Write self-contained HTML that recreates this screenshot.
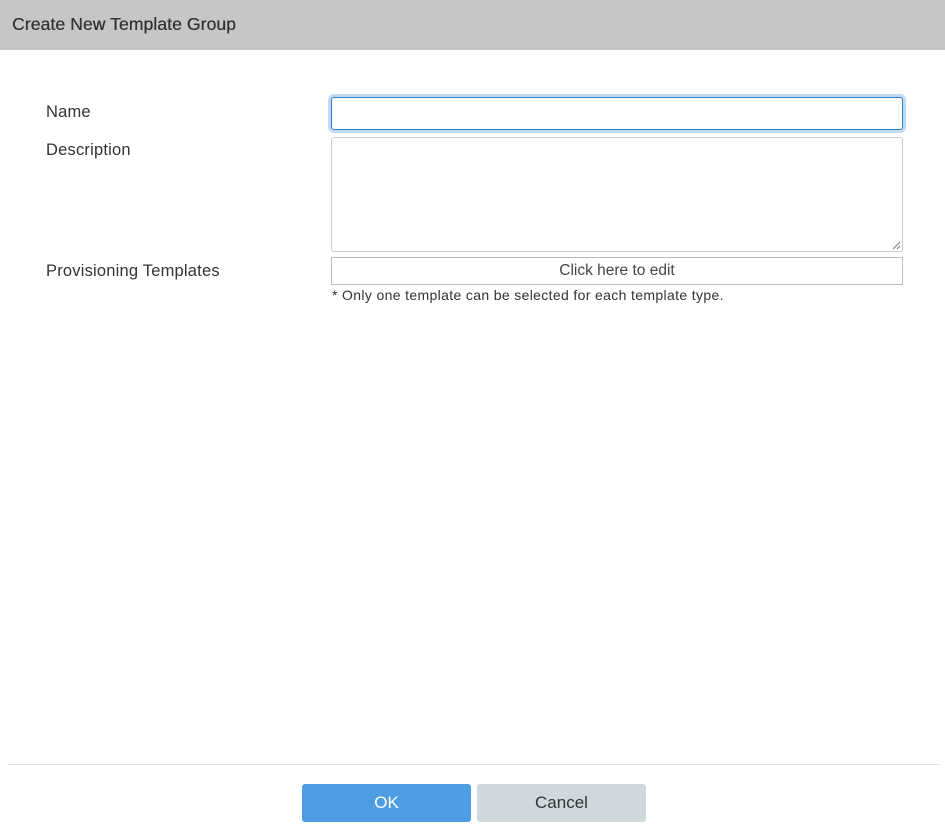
<!DOCTYPE html>
<html><head><style>
body{margin:0;width:945px;height:829px;background:#fff;font-family:"Liberation Sans",sans-serif;position:relative;overflow:hidden;color:#333}
.hdr{position:absolute;left:0;top:0;width:945px;height:50px;background:#c6c6c6}
.hdr span{position:absolute;left:12px;top:14px;font-size:17px;color:#333;letter-spacing:0.1px;font-weight:bold;-webkit-text-stroke:0;}
.lbl{position:absolute;left:46px;font-size:16.5px;color:#333;letter-spacing:0.2px}
.name{position:absolute;left:331px;top:97px;height:33px;border:1px solid #2b7cd3;border-radius:3px;box-shadow:0 0 0 3px #c2dbf3;box-sizing:border-box;width:572px}
.desc{position:absolute;left:331px;top:137px;width:572px;height:115px;border:1px solid #ccc;border-radius:3px;box-sizing:border-box}
.prov{position:absolute;left:331px;top:257px;width:572px;height:28px;border:1px solid #bbb;box-sizing:border-box;text-align:center;font-size:15.5px;line-height:25px;color:#444}
.note{position:absolute;left:332px;top:287px;font-size:14px;color:#333;letter-spacing:0.35px}
.line{position:absolute;left:8px;top:764px;width:932px;height:1px;background:#e3e3e3}
.btn{position:absolute;top:784px;height:38px;border-radius:3px;font-size:17px;text-align:center;line-height:37px}
.ok{left:302px;width:169px;background:#4e9de3;color:#fff}
.cc{left:477px;width:169px;background:#cfd8dd;color:#333}
</style></head><body>
<div class="hdr"><span style="font-weight:normal;font-size:17.5px;text-shadow:0.3px 0 0 #333">Create New Template Group</span></div>
<div class="lbl" style="top:103px">Name</div>
<div class="lbl" style="top:141px">Description</div>
<div class="lbl" style="top:262px">Provisioning Templates</div>
<div class="name"></div>
<div class="desc"><svg style="position:absolute;right:1px;bottom:1px" width="9" height="9"><path d="M1 8L8 1M5 8L8 5" stroke="#777" stroke-width="1"/></svg></div>
<div class="prov">Click here to edit</div>
<div class="note">* Only one template can be selected for each template type.</div>
<div class="line"></div>
<div class="btn ok">OK</div>
<div class="btn cc">Cancel</div>
</body></html>
